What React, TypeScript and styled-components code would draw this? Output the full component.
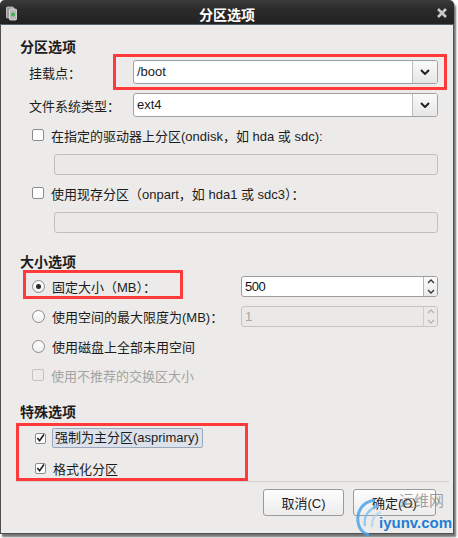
import React from 'react';
import styled, { createGlobalStyle } from 'styled-components';

const Global = createGlobalStyle`
  html, body { margin: 0; padding: 0; background: #ffffff; }
  body {
    font-family: "Liberation Sans", "Noto Sans CJK SC", sans-serif;
    font-size: 13px;
    color: #1c1c1c;
  }
  #root { width: 458px; height: 538px; overflow: hidden; }
`;

const Window = styled.div`
  position: relative;
  width: 454px;
  height: 534px;
  box-sizing: border-box;
  background: #edebe9;
  border: 1px solid #505050;
  border-top: none;
  border-radius: 5px 5px 0 0;
  box-shadow: 2px 3px 2px rgba(0, 0, 0, 0.55);
  display: flex;
  flex-direction: column;
`;

const TitleBar = styled.div`
  height: 24px;
  border-radius: 5px 5px 0 0;
  background: linear-gradient(#3b3b3b, #2a2a2a 40%, #222222);
  border-bottom: 1px solid #56606c;
  display: grid;
  grid-template-columns: 30px 1fr 30px;
  align-items: center;
  margin: 0 -1px;
`;

const TitleIcon = styled.div`
  display: flex;
  padding-left: 6px;
  padding-top: 2px;
`;

const TitleText = styled.div`
  text-align: center;
  color: #ffffff;
  font-weight: bold;
  font-size: 14px;
  padding-top: 3px;
`;

const CloseBox = styled.div`
  display: flex;
  justify-content: flex-end;
  padding-right: 7px;
  padding-top: 2px;
`;

const Content = styled.div`
  padding: 13px 15px 0 19px;
  display: flex;
  flex-direction: column;
`;

const SectionTitle = styled.div<{ $mt: number }>`
  margin-top: ${p => p.$mt}px;
  height: 18px;
  line-height: 18px;
  font-weight: bold;
  font-size: 14px;
`;

const FieldRow = styled.div<{ $mt: number }>`
  margin-top: ${p => p.$mt}px;
  display: grid;
  grid-template-columns: 113px 1fr;
  align-items: center;
`;

const FieldLabel = styled.div`
  padding-left: 9px;
`;

const Combo = styled.div`
  height: 24px;
  box-sizing: border-box;
  border: 1px solid #a2a2a2;
  border-radius: 3px;
  background: #ffffff;
  display: flex;
  overflow: hidden;
`;

const ComboValue = styled.div`
  flex: 1;
  padding-left: 3px;
  line-height: 22px;
  font-size: 13px;
`;

const ComboButton = styled.div`
  width: 24px;
  border-left: 1px solid #bdbdbd;
  background: linear-gradient(#fafafa, #e6e6e6);
  display: flex;
  align-items: center;
  justify-content: center;
`;

const CheckRow = styled.div<{ $mt: number; $indent?: number; $disabled?: boolean }>`
  margin-top: ${p => p.$mt}px;
  height: 20px;
  display: flex;
  align-items: center;
  gap: 7px;
  padding-left: ${p => p.$indent ?? 12}px;
  color: ${p => (p.$disabled ? '#a3a3a3' : 'inherit')};
`;

const Box = styled.div<{ $disabled?: boolean; $size?: number }>`
  width: ${p => p.$size ?? 12}px;
  height: ${p => p.$size ?? 12}px;
  box-sizing: border-box;
  border: 1px solid ${p => (p.$disabled ? '#c2c2c2' : '#8c8c8c')};
  border-radius: 2px;
  background: ${p => (p.$disabled ? '#ecebe9' : '#ffffff')};
  display: flex;
  align-items: center;
  justify-content: center;
  flex: none;
`;

const Radio = styled.div`
  width: 13px;
  height: 13px;
  box-sizing: border-box;
  border: 1px solid #8a8a8a;
  border-radius: 50%;
  background: linear-gradient(#ffffff, #f0f0f0);
  display: flex;
  align-items: center;
  justify-content: center;
  flex: none;
`;

const RadioDot = styled.div`
  width: 5px;
  height: 5px;
  border-radius: 50%;
  background: #2a2a2a;
`;

const FocusLabel = styled.div`
  height: 20px;
  box-sizing: border-box;
  line-height: 18px;
  padding: 0 3px 0 2px;
  border: 1px solid #9aa8bd;
  border-radius: 2px;
  background: #dde2ea;
  margin-left: -1px;
`;

const Entry = styled.div<{ $mt: number }>`
  margin-top: ${p => p.$mt}px;
  margin-left: 34px;
  height: 21px;
  box-sizing: border-box;
  border: 1px solid #bfbfbf;
  border-radius: 3px;
  background: #eae9e7;
`;

const RadioRow = styled.div<{ $mt: number }>`
  margin-top: ${p => p.$mt}px;
  display: grid;
  grid-template-columns: 221px 1fr;
  align-items: center;
  height: 21px;
`;

const RadioLabel = styled.div`
  display: flex;
  align-items: center;
  gap: 7px;
  padding-left: 12px;
`;

const Spin = styled.div<{ $disabled?: boolean }>`
  height: 21px;
  box-sizing: border-box;
  border: 1px solid ${p => (p.$disabled ? '#c4c4c4' : '#9c9c9c')};
  border-radius: 3px;
  background: ${p => (p.$disabled ? '#eae9e7' : '#ffffff')};
  color: ${p => (p.$disabled ? '#a6a6a6' : '#111')};
  display: flex;
  overflow: hidden;
`;

const SpinValue = styled.div`
  flex: 1;
  padding-left: 3px;
  line-height: 19px;
  letter-spacing: -0.5px;
`;

const SpinButtons = styled.div<{ $disabled?: boolean }>`
  width: 13px;
  border-left: 1px solid ${p => (p.$disabled ? '#cdcdcd' : '#b5b5b5')};
  background: ${p => (p.$disabled ? '#eae9e7' : 'linear-gradient(#fbfbfb, #e9e9e9)')};
  display: flex;
  flex-direction: column;
`;

const SpinHalf = styled.div`
  flex: 1;
  display: flex;
  align-items: center;
  justify-content: center;
`;

const Separator = styled.div`
  margin: 3px -11px 0 -4px;
  height: 1px;
  background: #d3d1ce;
`;

const ButtonRow = styled.div`
  margin-top: 7px;
  display: flex;
  justify-content: flex-end;
  gap: 9px;
  padding-right: 2px;
`;

const Button = styled.div<{ $w: number }>`
  width: ${p => p.$w}px;
  height: 27px;
  box-sizing: border-box;
  border: 1px solid #9b9b9b;
  border-radius: 3px;
  background: linear-gradient(#fdfdfd, #ececec);
  display: flex;
  align-items: center;
  justify-content: center;
`;

const RedBox = styled.div<{ $l: number; $t: number; $w: number; $h: number }>`
  position: absolute;
  left: ${p => p.$l}px;
  top: ${p => p.$t}px;
  width: ${p => p.$w}px;
  height: ${p => p.$h}px;
  box-sizing: border-box;
  border: 3px solid #ff3a3a;
  pointer-events: none;
`;

const Watermark = styled.div`
  position: absolute;
  left: 352px;
  top: 490px;
  width: 104px;
  height: 46px;
  pointer-events: none;
`;

const WmLogo = styled.svg`
  position: absolute;
  left: 0;
  top: 6px;
`;

const WmName = styled.div`
  position: absolute;
  left: 46px;
  top: 0px;
  font-family: "Noto Sans CJK SC", sans-serif;
  font-size: 15px;
  line-height: 20px;
  color: rgba(120, 120, 120, 0.7);
`;

const WmUrl = styled.div`
  position: absolute;
  left: 26px;
  top: 24px;
  font-family: "Liberation Sans", sans-serif;
  font-weight: bold;
  font-size: 15px;
  line-height: 18px;
  color: #1d7fd4;
`;

const Chevron = ({ w = 10, h = 6, color = '#222', sw = 2, up = false }: { w?: number; h?: number; color?: string; sw?: number; up?: boolean }) => (
  <svg width={w} height={h} viewBox={`0 0 ${w} ${h}`}>
    <path
      d={up ? `M1 ${h - 1} L${w / 2} 1 L${w - 1} ${h - 1}` : `M1 1 L${w / 2} ${h - 1} L${w - 1} 1`}
      fill="none"
      stroke={color}
      strokeWidth={sw}
    />
  </svg>
);

const Check = () => (
  <svg width="10" height="10" viewBox="0 0 10 10">
    <path d="M1.5 5 L4 8 L8.8 1.2" fill="none" stroke="#1e1e1e" strokeWidth="1.8" />
  </svg>
);

const ComboBox = ({ value }: { value: string }) => (
  <Combo>
    <ComboValue>{value}</ComboValue>
    <ComboButton>
      <Chevron />
    </ComboButton>
  </Combo>
);

const SpinBox = ({ value, disabled }: { value: string; disabled?: boolean }) => {
  const c = disabled ? '#b4b4b4' : '#333';
  return (
    <Spin $disabled={disabled}>
      <SpinValue>{value}</SpinValue>
      <SpinButtons $disabled={disabled}>
        <SpinHalf>
          <Chevron w={8} h={5} color={c} sw={1.3} up />
        </SpinHalf>
        <SpinHalf>
          <Chevron w={8} h={5} color={c} sw={1.3} />
        </SpinHalf>
      </SpinButtons>
    </Spin>
  );
};

export default function App() {
  return (
    <>
      <Global />
      <Window>
        <TitleBar>
          <TitleIcon>
            <svg width="12" height="15" viewBox="0 0 12 15">
              <rect x="0.5" y="1" width="7" height="11" rx="1" fill="#9a9a9a" stroke="#cfcfcf" strokeWidth="0.8" />
              <rect x="3.5" y="3" width="7" height="11" rx="1" fill="#b8b8b8" stroke="#e6e6e6" strokeWidth="0.8" />
              <circle cx="7" cy="8.5" r="2" fill="#3cb64a" />
            </svg>
          </TitleIcon>
          <TitleText>分区选项</TitleText>
          <CloseBox>
            <svg width="10" height="10" viewBox="0 0 10 10">
              <path d="M1 1 L9 9 M9 1 L1 9" stroke="#c9c9c9" strokeWidth="2.6" />
            </svg>
          </CloseBox>
        </TitleBar>
        <Content>
          <SectionTitle $mt={0}>分区选项</SectionTitle>
          <FieldRow $mt={4}>
            <FieldLabel>挂载点：</FieldLabel>
            <ComboBox value="/boot" />
          </FieldRow>
          <FieldRow $mt={9}>
            <FieldLabel>文件系统类型：</FieldLabel>
            <ComboBox value="ext4" />
          </FieldRow>
          <CheckRow $mt={8}>
            <Box />
            <span>在指定的驱动器上分区(ondisk，如 hda 或 sdc):</span>
          </CheckRow>
          <Entry $mt={9} />
          <CheckRow $mt={8}>
            <Box />
            <span>使用现存分区（onpart，如 hda1 或 sdc3）：</span>
          </CheckRow>
          <Entry $mt={9} />

          <SectionTitle $mt={20}>大小选项</SectionTitle>
          <RadioRow $mt={5}>
            <RadioLabel>
              <Radio>
                <RadioDot />
              </Radio>
              <span>固定大小（MB）：</span>
            </RadioLabel>
            <SpinBox value="500" />
          </RadioRow>
          <RadioRow $mt={9}>
            <RadioLabel>
              <Radio />
              <span>使用空间的最大限度为(MB)：</span>
            </RadioLabel>
            <SpinBox value="1" disabled />
          </RadioRow>
          <RadioRow $mt={9}>
            <RadioLabel>
              <Radio />
              <span>使用磁盘上全部未用空间</span>
            </RadioLabel>
          </RadioRow>
          <CheckRow $mt={8} $disabled>
            <Box $disabled />
            <span>使用不推荐的交换区大小</span>
          </CheckRow>

          <SectionTitle $mt={18}>特殊选项</SectionTitle>
          <CheckRow $mt={7} $indent={15}>
            <Box $size={11}>
              <Check />
            </Box>
            <FocusLabel>强制为主分区(asprimary)</FocusLabel>
          </CheckRow>
          <CheckRow $mt={10} $indent={15}>
            <Box $size={11}>
              <Check />
            </Box>
            <span>格式化分区</span>
          </CheckRow>
          <Separator />
          <ButtonRow>
            <Button $w={81}>取消(C)</Button>
            <Button $w={83}>确定(O)</Button>
          </ButtonRow>
        </Content>

        <RedBox $l={112} $t={54} $w={334} $h={36} />
        <RedBox $l={22} $t={270} $w={160} $h={29} />
        <RedBox $l={15} $t={423} $w={232} $h={58} />

        <Watermark>
          <WmLogo width="30" height="40" viewBox="0 0 30 40">
            <path d="M22 4 C8 6 2 18 6 30 C8 35 12 38 16 39" fill="none" stroke="#4aa3e8" strokeWidth="3" opacity="0.85" />
            <path d="M26 10 C16 12 10 20 12 30" fill="none" stroke="#7cc0f0" strokeWidth="2.4" opacity="0.8" />
            <path d="M28 16 C22 18 18 24 19 31" fill="none" stroke="#a7d5f5" strokeWidth="2" opacity="0.8" />
          </WmLogo>
          <WmName>运维网</WmName>
          <WmUrl>iyunv.com</WmUrl>
        </Watermark>
      </Window>
    </>
  );
}
